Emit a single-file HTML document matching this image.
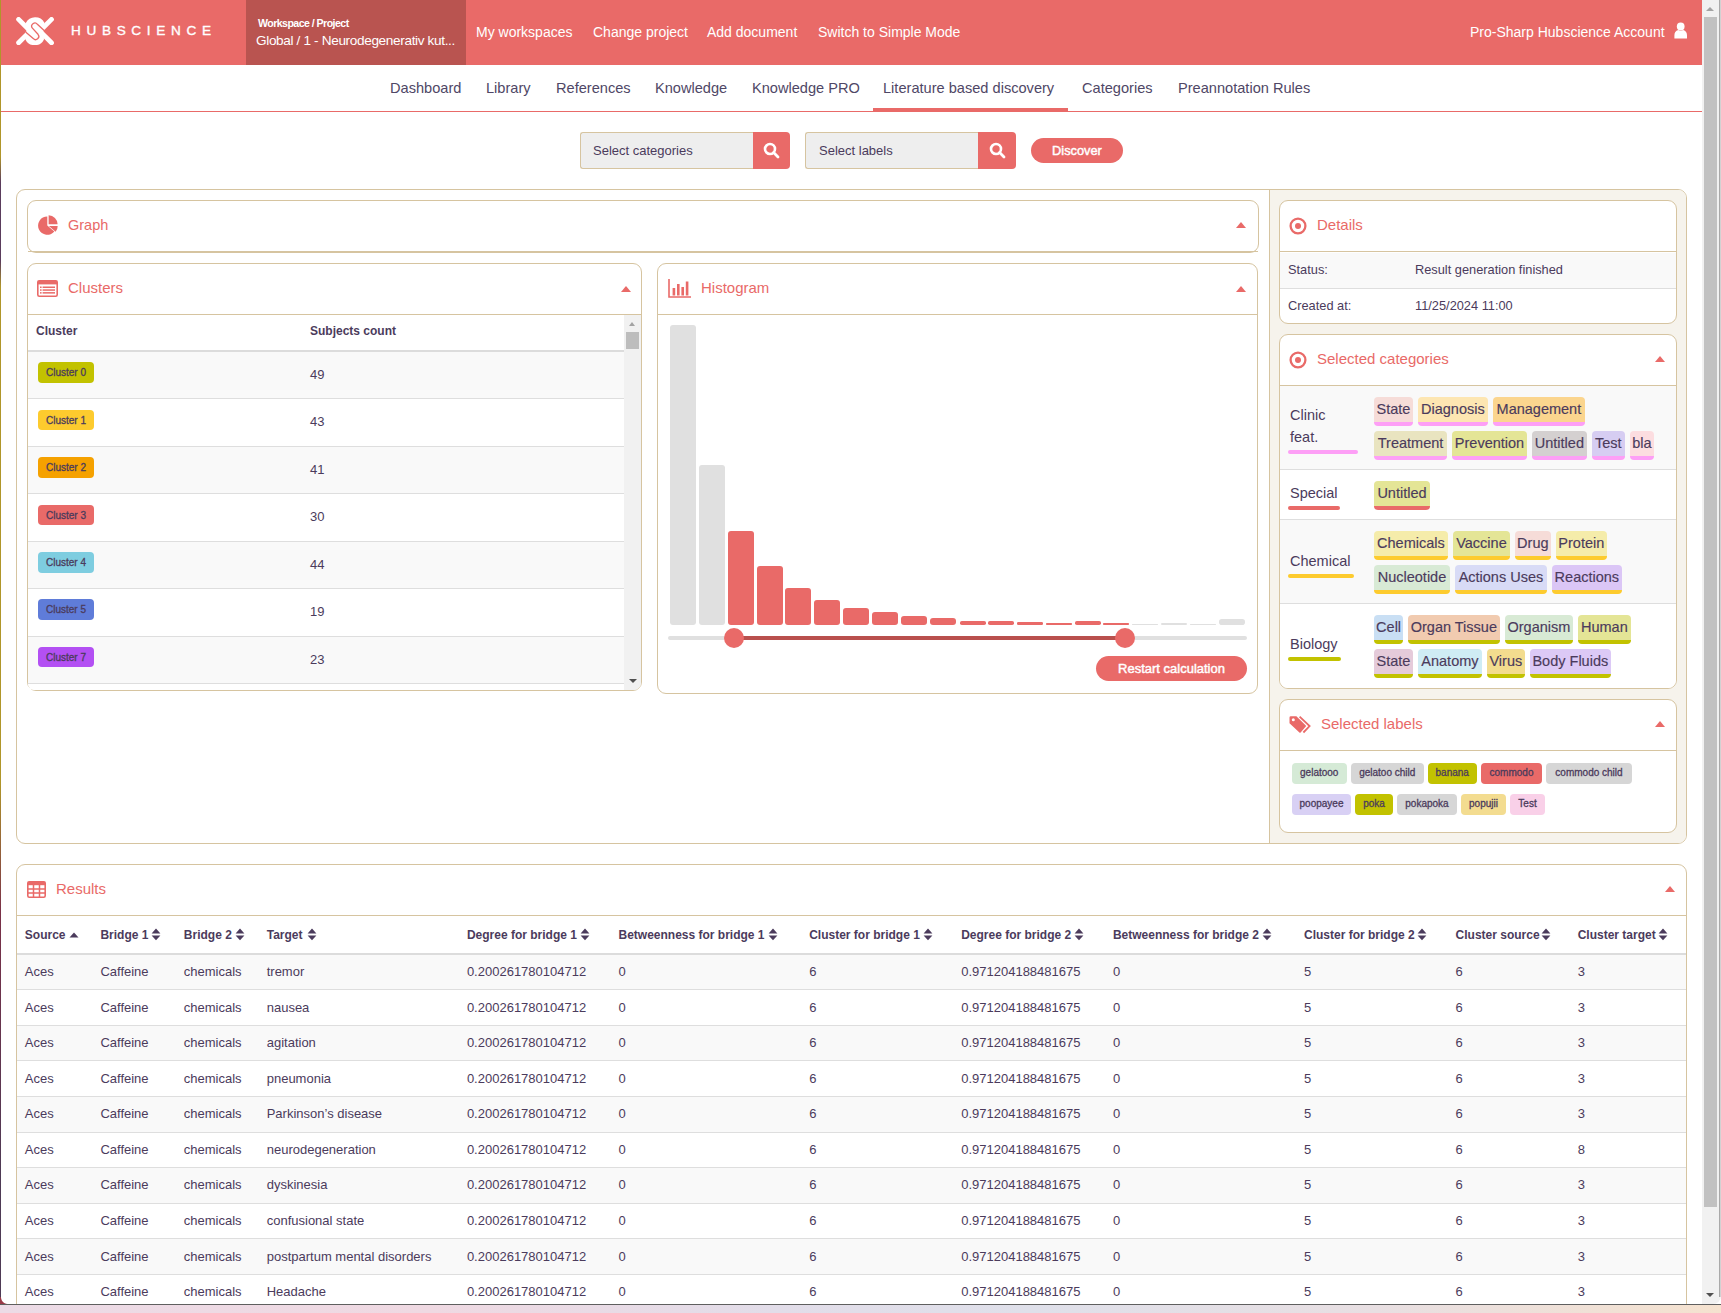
<!DOCTYPE html>
<html><head><meta charset="utf-8">
<style>
*{box-sizing:border-box;}
html,body{margin:0;padding:0;}
body{width:1721px;height:1313px;overflow:hidden;position:relative;background:#fff;font-family:"Liberation Sans",sans-serif;color:#4b3b5c;}
.abs{position:absolute;}
.nw{white-space:nowrap;}
#hdr{position:absolute;left:0;top:0;width:1702px;height:65px;background:#e96a68;}
#ws{position:absolute;left:246px;top:0;width:220px;height:65px;background:#b95450;}
.toplink{position:absolute;top:24px;font-size:14px;color:#fff;white-space:nowrap;line-height:17px;}
.tab{position:absolute;top:79px;font-size:14.6px;color:#4f4766;white-space:nowrap;line-height:18px;}
.panel{position:absolute;border:1px solid #d6c4a0;border-radius:9px;background:#fff;}
.ph{position:absolute;left:0;right:0;top:0;height:51px;border-bottom:1px solid #d6c4a0;}
.ptitle{position:absolute;font-size:15px;color:#e96a68;white-space:nowrap;line-height:18px;}
.tg{-webkit-text-stroke:0.15px #4b3b5c;height:29px;border-bottom:4px solid #fff;border-radius:4px;font-size:14.5px;line-height:24.5px;text-align:center;color:#4b3b5c;}
.caret{position:absolute;width:0;height:0;border-left:5px solid transparent;border-right:5px solid transparent;border-bottom:6px solid #e96a68;}
</style></head>
<body>
<!-- header -->
<div id="hdr"></div>
<div id="ws"></div>
<svg class="abs" style="left:16px;top:17px" width="38" height="28" viewBox="0 0 38 28">
  <g stroke="#fff" stroke-width="4.8" stroke-linecap="round" fill="none">
    <path d="M2.6 2.4 L12.5 12.3"/>
    <path d="M35.5 25.8 L25.6 15.9"/>
    <path d="M35.5 2.4 L25.6 12.3"/>
    <path d="M2.6 25.8 L12.5 15.9"/>
  </g>
  <path d="M9.8 6.1 A10.5 10.5 0 0 1 28.4 5.8 L27.4 13.8 L28 22.4 A10.35 10.35 0 0 1 9.4 22.4 L10.6 14.2 Z" fill="#fff"/>
  <path d="M9.9 15.2 L17.2 21.4 A3.1 3.1 0 0 0 22 17.3 L16.4 11.2 A3.1 3.1 0 0 1 21.4 7.3 L28.4 13.8" fill="none" stroke="#e96a68" stroke-width="1.3"/>
</svg>
<div class="abs nw" style="left:71px;top:23.8px;font-size:13.6px;letter-spacing:5.65px;color:#fff;line-height:14px;-webkit-text-stroke:0.35px #fff;">HUBSCIENCE</div>
<div class="abs nw" style="left:258px;top:16.5px;font-size:10.6px;font-weight:bold;color:#fff;letter-spacing:-0.55px;line-height:12px;">Workspace / Project</div>
<div class="abs nw" style="left:256px;top:33px;font-size:13.6px;color:#fff;letter-spacing:-0.35px;line-height:16px;">Global / 1 - Neurodegenerativ kut...</div>
<div class="toplink" style="left:476px">My workspaces</div>
<div class="toplink" style="left:593px">Change project</div>
<div class="toplink" style="left:707px">Add document</div>
<div class="toplink" style="left:818px">Switch to Simple Mode</div>
<div class="toplink" style="left:1470px">Pro-Sharp Hubscience Account</div>
<svg class="abs" style="left:1674px;top:22px" width="14" height="18" viewBox="0 0 14 18"><path d="M0.4 16.6 V13.4 A5.6 5.6 0 0 1 4.2 8 Q6.7 9.6 9.2 8 A5.6 5.6 0 0 1 13 13.4 V16.6 Z" fill="#fff"/><circle cx="6.7" cy="4.5" r="3.9" fill="#fff"/></svg>

<!-- nav tabs -->
<div class="abs" style="left:1px;top:111px;width:1701px;height:1px;background:#e96a68;"></div>
<div class="abs" style="left:873px;top:108px;width:195px;height:4px;background:#e96a68;"></div>
<div class="tab" style="left:390px">Dashboard</div>
<div class="tab" style="left:486px">Library</div>
<div class="tab" style="left:556px">References</div>
<div class="tab" style="left:655px">Knowledge</div>
<div class="tab" style="left:752px">Knowledge PRO</div>
<div class="tab" style="left:883px">Literature based discovery</div>
<div class="tab" style="left:1082px">Categories</div>
<div class="tab" style="left:1178px">Preannotation Rules</div>

<!-- search row -->
<div class="abs" style="left:580px;top:132px;width:174px;height:37px;background:#eeeeee;border:1px solid #d6c4a0;border-right:none;border-radius:3px 0 0 3px;"></div>
<div class="abs nw" style="left:593px;top:143px;font-size:13px;line-height:15px;color:#4b3b5c;">Select categories</div>
<div class="abs" style="left:753px;top:132px;width:37px;height:37px;background:#e96a68;border-radius:0 4px 4px 0;"></div>
<svg class="abs" style="left:763px;top:142px" width="17" height="17" viewBox="0 0 17 17"><circle cx="7" cy="7" r="5" fill="none" stroke="#fff" stroke-width="2.6"/><path d="M10.6 10.6 L15 15" stroke="#fff" stroke-width="2.8" stroke-linecap="round"/></svg>
<div class="abs" style="left:805px;top:132px;width:174px;height:37px;background:#eeeeee;border:1px solid #d6c4a0;border-right:none;border-radius:3px 0 0 3px;"></div>
<div class="abs nw" style="left:819px;top:143px;font-size:13px;line-height:15px;color:#4b3b5c;">Select labels</div>
<div class="abs" style="left:978px;top:132px;width:38px;height:37px;background:#e96a68;border-radius:0 4px 4px 0;"></div>
<svg class="abs" style="left:989px;top:142px" width="17" height="17" viewBox="0 0 17 17"><circle cx="7" cy="7" r="5" fill="none" stroke="#fff" stroke-width="2.6"/><path d="M10.6 10.6 L15 15" stroke="#fff" stroke-width="2.8" stroke-linecap="round"/></svg>
<div class="abs nw" style="left:1031px;top:138px;width:92px;height:25px;background:#e96a68;border-radius:13px;color:#fff;font-size:12.8px;text-align:center;line-height:26px;-webkit-text-stroke:0.45px #fff;">Discover</div>

<!-- main panel -->
<div class="panel" style="left:16px;top:189px;width:1671px;height:655px;overflow:hidden;">
  <div class="abs" style="left:1252px;top:0;width:418px;height:653px;background:#f6f3ec;border-left:1px solid #d6c4a0;"></div>
</div>
<!-- graph panel -->
<div class="panel" style="left:27px;top:200px;width:1232px;height:53px;"></div>
<div class="abs" style="left:28px;top:251px;width:1230px;height:1px;background:#d6c4a0;"></div>
<svg class="abs" style="left:37px;top:215px" width="22" height="21" viewBox="0 0 22 21"><path d="M10.3 10.6 L10.3 1.4 A9.2 9.2 0 1 0 17.35 16.5 Z" fill="#e96a68"/><path d="M11.6 9.3 L11.6 0.3 A9 9 0 0 1 20.6 9.3 Z" fill="#e96a68"/><path d="M11.9 11 L20.7 11 A9 9 0 0 1 18.6 16.8 Z" fill="#e96a68"/></svg>
<div class="ptitle" style="left:68px;top:216px;font-size:14.5px;">Graph</div>
<div class="caret" style="left:1236px;top:222px;"></div>

<!-- clusters panel -->
<div class="panel" style="left:27px;top:263px;width:615px;height:428px;overflow:hidden;">
  <div class="ph" style="height:51px;"></div>
</div>
<svg class="abs" style="left:37px;top:280px" width="21" height="17" viewBox="0 0 21 17"><rect x="0.8" y="0.8" width="19.4" height="15.4" rx="1.5" fill="none" stroke="#e96a68" stroke-width="1.6"/><rect x="0.8" y="0.8" width="19.4" height="3.6" fill="#e96a68"/><g fill="#e96a68"><rect x="3" y="6.5" width="1.6" height="1.5"/><rect x="3" y="9.3" width="1.6" height="1.5"/><rect x="3" y="12.1" width="1.6" height="1.5"/><rect x="5.6" y="6.5" width="12.4" height="1.5"/><rect x="5.6" y="9.3" width="12.4" height="1.5"/><rect x="5.6" y="12.1" width="12.4" height="1.5"/></g></svg>
<div class="ptitle" style="left:68px;top:279px;">Clusters</div>
<div class="caret" style="left:621px;top:286px;"></div>
<!-- clusters table -->
<div class="abs nw" style="left:36px;top:324px;font-size:12px;font-weight:bold;line-height:15px;">Cluster</div>
<div class="abs nw" style="left:310px;top:324px;font-size:12px;font-weight:bold;line-height:15px;">Subjects count</div>
<div class="abs" style="left:28px;top:350px;width:596px;height:2px;background:#dcdcdc;"></div>
<div class="abs" style="left:28px;top:352.00px;width:596px;height:47.45px;background:#f9f9f9;border-bottom:1px solid #dedede;"></div>
<div class="abs nw" style="left:38px;top:362.20px;width:56px;height:20.5px;background:#c2c200;border-radius:4px;font-size:10px;line-height:21px;text-align:center;color:#4b3b5c;-webkit-text-stroke:0.3px #4b3b5c;">Cluster 0</div>
<div class="abs nw" style="left:310px;top:367.00px;font-size:13px;line-height:15px;">49</div>
<div class="abs" style="left:28px;top:399.45px;width:596px;height:47.45px;background:#fff;border-bottom:1px solid #dedede;"></div>
<div class="abs nw" style="left:38px;top:409.65px;width:56px;height:20.5px;background:#fdcb2e;border-radius:4px;font-size:10px;line-height:21px;text-align:center;color:#4b3b5c;-webkit-text-stroke:0.3px #4b3b5c;">Cluster 1</div>
<div class="abs nw" style="left:310px;top:414.45px;font-size:13px;line-height:15px;">43</div>
<div class="abs" style="left:28px;top:446.90px;width:596px;height:47.45px;background:#f9f9f9;border-bottom:1px solid #dedede;"></div>
<div class="abs nw" style="left:38px;top:457.10px;width:56px;height:20.5px;background:#f5a100;border-radius:4px;font-size:10px;line-height:21px;text-align:center;color:#4b3b5c;-webkit-text-stroke:0.3px #4b3b5c;">Cluster 2</div>
<div class="abs nw" style="left:310px;top:461.90px;font-size:13px;line-height:15px;">41</div>
<div class="abs" style="left:28px;top:494.35px;width:596px;height:47.45px;background:#fff;border-bottom:1px solid #dedede;"></div>
<div class="abs nw" style="left:38px;top:504.55px;width:56px;height:20.5px;background:#e96a68;border-radius:4px;font-size:10px;line-height:21px;text-align:center;color:#4b3b5c;-webkit-text-stroke:0.3px #4b3b5c;">Cluster 3</div>
<div class="abs nw" style="left:310px;top:509.35px;font-size:13px;line-height:15px;">30</div>
<div class="abs" style="left:28px;top:541.80px;width:596px;height:47.45px;background:#f9f9f9;border-bottom:1px solid #dedede;"></div>
<div class="abs nw" style="left:38px;top:552.00px;width:56px;height:20.5px;background:#7ecde0;border-radius:4px;font-size:10px;line-height:21px;text-align:center;color:#4b3b5c;-webkit-text-stroke:0.3px #4b3b5c;">Cluster 4</div>
<div class="abs nw" style="left:310px;top:556.80px;font-size:13px;line-height:15px;">44</div>
<div class="abs" style="left:28px;top:589.25px;width:596px;height:47.45px;background:#fff;border-bottom:1px solid #dedede;"></div>
<div class="abs nw" style="left:38px;top:599.45px;width:56px;height:20.5px;background:#5f7cd9;border-radius:4px;font-size:10px;line-height:21px;text-align:center;color:#4b3b5c;-webkit-text-stroke:0.3px #4b3b5c;">Cluster 5</div>
<div class="abs nw" style="left:310px;top:604.25px;font-size:13px;line-height:15px;">19</div>
<div class="abs" style="left:28px;top:636.70px;width:596px;height:47.45px;background:#f9f9f9;border-bottom:1px solid #dedede;"></div>
<div class="abs nw" style="left:38px;top:646.90px;width:56px;height:20.5px;background:#b350f3;border-radius:4px;font-size:10px;line-height:21px;text-align:center;color:#4b3b5c;-webkit-text-stroke:0.3px #4b3b5c;">Cluster 7</div>
<div class="abs nw" style="left:310px;top:651.70px;font-size:13px;line-height:15px;">23</div>
<div class="abs" style="left:28px;top:684.15px;width:596px;height:5.5px;background:#fff;border-bottom-left-radius:8px;"></div>

<!-- clusters scrollbar -->
<div class="abs" style="left:624px;top:315px;width:17px;height:375px;background:#f1f1f1;border-radius:0 0 7px 0;"></div>
<div class="abs" style="left:626px;top:332px;width:13px;height:17px;background:#bdbdbd;"></div>
<div class="abs" style="left:629px;top:322px;width:0;height:0;border-left:3.5px solid transparent;border-right:3.5px solid transparent;border-bottom:4px solid #a3a3a3;"></div>
<div class="abs" style="left:628.5px;top:679px;width:0;height:0;border-left:4px solid transparent;border-right:4px solid transparent;border-bottom:none;border-top:4px solid #505050;"></div>

<!-- histogram panel -->
<div class="panel" style="left:657px;top:263px;width:601px;height:431px;">
  <div class="ph" style="height:51px;"></div>
</div>
<svg class="abs" style="left:668px;top:279px" width="24" height="19" viewBox="0 0 24 19"><path d="M1 0 V18 H23" fill="none" stroke="#e96a68" stroke-width="1.6"/><g fill="#e96a68"><rect x="4.6" y="9" width="2.6" height="7.5"/><rect x="9" y="5" width="2.6" height="11.5"/><rect x="13.4" y="8" width="2.6" height="8.5"/><rect x="17.8" y="2.5" width="2.6" height="14"/></g></svg>
<div class="ptitle" style="left:701px;top:279px;">Histogram</div>
<div class="caret" style="left:1236px;top:286px;"></div>
<div class="abs" style="left:670px;top:325px;width:26px;height:299.5px;background:#e0e0e0;border-radius:3.0px;"></div>
<div class="abs" style="left:699px;top:465px;width:26px;height:159.5px;background:#e0e0e0;border-radius:3.0px;"></div>
<div class="abs" style="left:728px;top:531px;width:26px;height:93.5px;background:#e96a68;border-radius:3.0px;"></div>
<div class="abs" style="left:757px;top:566px;width:26px;height:58.5px;background:#e96a68;border-radius:3.0px;"></div>
<div class="abs" style="left:785px;top:588px;width:26px;height:36.5px;background:#e96a68;border-radius:3.0px;"></div>
<div class="abs" style="left:814px;top:600px;width:26px;height:24.5px;background:#e96a68;border-radius:3.0px;"></div>
<div class="abs" style="left:843px;top:608px;width:26px;height:16.5px;background:#e96a68;border-radius:3.0px;"></div>
<div class="abs" style="left:872px;top:612px;width:26px;height:12.5px;background:#e96a68;border-radius:3.0px;"></div>
<div class="abs" style="left:901px;top:615.5px;width:26px;height:9.0px;background:#e96a68;border-radius:3.0px;"></div>
<div class="abs" style="left:930px;top:618px;width:26px;height:6.5px;background:#e96a68;border-radius:3.0px;"></div>
<div class="abs" style="left:959.5px;top:621px;width:26px;height:3.5px;background:#e96a68;border-radius:1.8px;"></div>
<div class="abs" style="left:988px;top:621px;width:26px;height:3.5px;background:#e96a68;border-radius:1.8px;"></div>
<div class="abs" style="left:1017px;top:622px;width:26px;height:2.5px;background:#e96a68;border-radius:1.2px;"></div>
<div class="abs" style="left:1046px;top:623px;width:26px;height:1.5px;background:#e96a68;border-radius:0.8px;"></div>
<div class="abs" style="left:1075px;top:621px;width:26px;height:3.5px;background:#e96a68;border-radius:1.8px;"></div>
<div class="abs" style="left:1103px;top:623px;width:26px;height:1.5px;background:#e96a68;border-radius:0.8px;"></div>
<div class="abs" style="left:1132px;top:623.5px;width:26px;height:1.0px;background:#e0e0e0;border-radius:0.5px;"></div>
<div class="abs" style="left:1161px;top:622.5px;width:26px;height:2.0px;background:#e0e0e0;border-radius:1.0px;"></div>
<div class="abs" style="left:1190px;top:623.5px;width:26px;height:1.0px;background:#e0e0e0;border-radius:0.5px;"></div>
<div class="abs" style="left:1219px;top:619px;width:26px;height:5.5px;background:#e0e0e0;border-radius:2.8px;"></div>
<div class="abs" style="left:668px;top:635.5px;width:579px;height:4px;background:#e0e0e0;border-radius:2px;"></div>
<div class="abs" style="left:734px;top:635.5px;width:391px;height:4px;background:#b9504d;"></div>
<div class="abs" style="left:724px;top:627.5px;width:20px;height:20px;background:#e96a68;border-radius:50%;"></div>
<div class="abs" style="left:1115px;top:627.5px;width:20px;height:20px;background:#e96a68;border-radius:50%;"></div>
<div class="abs nw" style="left:1096px;top:656px;width:151px;height:25px;background:#e96a68;border-radius:13px;color:#fff;font-size:13px;text-align:center;line-height:25.5px;-webkit-text-stroke:0.45px #fff;">Restart calculation</div>

<!-- details panel -->
<div class="panel" style="left:1279px;top:200px;width:398px;height:124px;overflow:hidden;">
  <div class="abs" style="left:0;top:52px;width:396px;height:36px;background:#f9f9f9;border-bottom:1px solid #dedede;"></div>
  <div class="ph" style="height:51px;"></div>
</div>
<svg class="abs" style="left:1289px;top:217px" width="18" height="18" viewBox="0 0 18 18"><circle cx="9" cy="9" r="7.4" fill="none" stroke="#e96a68" stroke-width="2.3"/><circle cx="9" cy="9" r="3" fill="#e96a68"/></svg>
<div class="ptitle" style="left:1317px;top:216px;">Details</div>
<div class="abs nw" style="left:1288px;top:262px;font-size:12.8px;line-height:15px;">Status:</div>
<div class="abs nw" style="left:1415px;top:262px;font-size:12.8px;line-height:15px;">Result generation finished</div>
<div class="abs nw" style="left:1288px;top:298px;font-size:12.8px;line-height:15px;">Created at:</div>
<div class="abs nw" style="left:1415px;top:298px;font-size:12.8px;line-height:15px;">11/25/2024 11:00</div>

<!-- selected categories panel -->
<div class="panel" style="left:1279px;top:334px;width:398px;height:355px;overflow:hidden;">
  <div class="ph" style="height:51px;"></div>
  <div class="abs" style="left:0;top:51.0px;width:396px;height:84.4px;background:#f9f9f9;border-bottom:1px solid #dedede;"></div>
<div class="abs" style="left:0;top:135.4px;width:396px;height:49.9px;background:#fff;border-bottom:1px solid #dedede;"></div>
<div class="abs" style="left:0;top:185.3px;width:396px;height:84.2px;background:#f9f9f9;border-bottom:1px solid #dedede;"></div>
<div class="abs" style="left:0;top:269.5px;width:396px;height:83.5px;background:#fff;"></div>

</div>
<svg class="abs" style="left:1289px;top:351px" width="18" height="18" viewBox="0 0 18 18"><circle cx="9" cy="9" r="7.4" fill="none" stroke="#e96a68" stroke-width="2.3"/><circle cx="9" cy="9" r="3" fill="#e96a68"/></svg>
<div class="ptitle" style="left:1317px;top:350px;">Selected categories</div>
<div class="caret" style="left:1655px;top:356px;"></div>
<div class="abs nw tg" style="left:1374.2px;top:397.0px;width:38.6px;background:#f6dcd8;border-bottom-color:#fd9ff6;">State</div>
<div class="abs nw tg" style="left:1418.1px;top:397.0px;width:69.6px;background:#fde6b2;border-bottom-color:#fd9ff6;">Diagnosis</div>
<div class="abs nw tg" style="left:1493.0px;top:397.0px;width:91.8px;background:#fbd58e;border-bottom-color:#fd9ff6;">Management</div>
<div class="abs nw tg" style="left:1374.2px;top:431.3px;width:72.7px;background:#e9e4c0;border-bottom-color:#fd9ff6;">Treatment</div>
<div class="abs nw tg" style="left:1452.3px;top:431.3px;width:74.4px;background:#e4e596;border-bottom-color:#fd9ff6;">Prevention</div>
<div class="abs nw tg" style="left:1532.1px;top:431.3px;width:54.6px;background:#d4d0d0;border-bottom-color:#fd9ff6;">Untitled</div>
<div class="abs nw tg" style="left:1592.1px;top:431.3px;width:32.5px;background:#d6cdf2;border-bottom-color:#fd9ff6;">Test</div>
<div class="abs nw tg" style="left:1630.2px;top:431.3px;width:23.6px;background:#fcdde0;border-bottom-color:#fd9ff6;">bla</div>
<div class="abs nw tg" style="left:1374.2px;top:481.2px;width:55.6px;background:#e4e596;border-bottom-color:#e96a68;">Untitled</div>
<div class="abs nw tg" style="left:1374.2px;top:531.2px;width:73.4px;background:#f5ecaa;border-bottom-color:#fdcb2e;">Chemicals</div>
<div class="abs nw tg" style="left:1453.0px;top:531.2px;width:56.9px;background:#e4e596;border-bottom-color:#fdcb2e;">Vaccine</div>
<div class="abs nw tg" style="left:1515.0px;top:531.2px;width:35.6px;background:#f6dcd8;border-bottom-color:#fdcb2e;">Drug</div>
<div class="abs nw tg" style="left:1556.0px;top:531.2px;width:50.7px;background:#f5ecaa;border-bottom-color:#fdcb2e;">Protein</div>
<div class="abs nw tg" style="left:1374.2px;top:565.2px;width:75.6px;background:#d8ead5;border-bottom-color:#fdcb2e;">Nucleotide</div>
<div class="abs nw tg" style="left:1455.2px;top:565.2px;width:91.5px;background:#d8dbf6;border-bottom-color:#fdcb2e;">Actions Uses</div>
<div class="abs nw tg" style="left:1552.1px;top:565.2px;width:69.5px;background:#dbc6f6;border-bottom-color:#fdcb2e;">Reactions</div>
<div class="abs nw tg" style="left:1374.2px;top:615.3px;width:28.8px;background:#c9dff4;border-bottom-color:#c2c200;">Cell</div>
<div class="abs nw tg" style="left:1408.1px;top:615.3px;width:91.5px;background:#f1cbb0;border-bottom-color:#c2c200;">Organ Tissue</div>
<div class="abs nw tg" style="left:1505.0px;top:615.3px;width:67.8px;background:#d8ead5;border-bottom-color:#c2c200;">Organism</div>
<div class="abs nw tg" style="left:1578.0px;top:615.3px;width:52.7px;background:#e4e596;border-bottom-color:#c2c200;">Human</div>
<div class="abs nw tg" style="left:1374.2px;top:649.3px;width:38.6px;background:#e5cbda;border-bottom-color:#c2c200;">State</div>
<div class="abs nw tg" style="left:1418.1px;top:649.3px;width:63.7px;background:#cfecf4;border-bottom-color:#c2c200;">Anatomy</div>
<div class="abs nw tg" style="left:1486.9px;top:649.3px;width:37.9px;background:#f3dc8e;border-bottom-color:#c2c200;">Virus</div>
<div class="abs nw tg" style="left:1530.1px;top:649.3px;width:80.5px;background:#dcc9f6;border-bottom-color:#c2c200;">Body Fluids</div>
<div class="abs nw" style="left:1290px;top:404px;font-size:14.5px;line-height:22px;">Clinic<br>feat.</div>
<div class="abs" style="left:1288px;top:450px;width:70px;height:4px;background:#fd9ff6;border-radius:2px;"></div>
<div class="abs nw" style="left:1290px;top:482px;font-size:14.5px;line-height:22px;">Special</div>
<div class="abs" style="left:1288px;top:506px;width:52px;height:4px;background:#e96a68;border-radius:2px;"></div>
<div class="abs nw" style="left:1290px;top:549.5px;font-size:14.5px;line-height:22px;">Chemical</div>
<div class="abs" style="left:1288px;top:574px;width:66px;height:4px;background:#fdcb2e;border-radius:2px;"></div>
<div class="abs nw" style="left:1290px;top:633px;font-size:14.5px;line-height:22px;">Biology</div>
<div class="abs" style="left:1288px;top:657px;width:53px;height:4px;background:#c2c200;border-radius:2px;"></div>


<!-- selected labels panel -->
<div class="panel" style="left:1279px;top:699px;width:398px;height:134px;">
  <div class="ph" style="height:51px;"></div>
</div>
<svg class="abs" style="left:1289px;top:714px" width="24" height="20" viewBox="0 0 24 20"><path d="M0.5 3.6 L0.5 9.2 L10.4 18.4 Q11 18.9 11.6 18.4 L16.8 12.6 Q17.3 12.1 16.8 11.6 L7.4 2.3 L1.8 2.3 Q0.5 2.3 0.5 3.6 Z" fill="#e96a68"/><circle cx="4.3" cy="5.8" r="1.5" fill="#fff"/><path d="M10.6 2.6 L20.6 12.1 L14.4 18.5" fill="none" stroke="#e96a68" stroke-width="1.8"/></svg>
<div class="ptitle" style="left:1321px;top:715px;">Selected labels</div>
<div class="caret" style="left:1655px;top:721px;"></div>
<div class="abs nw" style="left:1292px;top:763.25px;width:54.5px;height:20.5px;background:#d5ead6;border-radius:4px;font-size:10px;line-height:20.5px;text-align:center;-webkit-text-stroke:0.3px #4b3b5c;">gelatooo</div>
<div class="abs nw" style="left:1351px;top:763.25px;width:72.5px;height:20.5px;background:#d6d6d6;border-radius:4px;font-size:10px;line-height:20.5px;text-align:center;-webkit-text-stroke:0.3px #4b3b5c;">gelatoo child</div>
<div class="abs nw" style="left:1428px;top:763.25px;width:48.5px;height:20.5px;background:#c2c200;border-radius:4px;font-size:10px;line-height:20.5px;text-align:center;-webkit-text-stroke:0.3px #4b3b5c;">banana</div>
<div class="abs nw" style="left:1481px;top:763.25px;width:61px;height:20.5px;background:#e96a68;border-radius:4px;font-size:10px;line-height:20.5px;text-align:center;-webkit-text-stroke:0.3px #4b3b5c;">commodo</div>
<div class="abs nw" style="left:1546px;top:763.25px;width:86px;height:20.5px;background:#d6d6d6;border-radius:4px;font-size:10px;line-height:20.5px;text-align:center;-webkit-text-stroke:0.3px #4b3b5c;">commodo child</div>
<div class="abs nw" style="left:1292px;top:794.25px;width:59px;height:20.5px;background:#d8d0f4;border-radius:4px;font-size:10px;line-height:20.5px;text-align:center;-webkit-text-stroke:0.3px #4b3b5c;">poopayee</div>
<div class="abs nw" style="left:1355px;top:794.25px;width:38px;height:20.5px;background:#c2c200;border-radius:4px;font-size:10px;line-height:20.5px;text-align:center;-webkit-text-stroke:0.3px #4b3b5c;">poka</div>
<div class="abs nw" style="left:1397px;top:794.25px;width:60px;height:20.5px;background:#d6d6d6;border-radius:4px;font-size:10px;line-height:20.5px;text-align:center;-webkit-text-stroke:0.3px #4b3b5c;">pokapoka</div>
<div class="abs nw" style="left:1461px;top:794.25px;width:45px;height:20.5px;background:#f3dc90;border-radius:4px;font-size:10px;line-height:20.5px;text-align:center;-webkit-text-stroke:0.3px #4b3b5c;">popujii</div>
<div class="abs nw" style="left:1510px;top:794.25px;width:35px;height:20.5px;background:#f9d0e8;border-radius:4px;font-size:10px;line-height:20.5px;text-align:center;-webkit-text-stroke:0.3px #4b3b5c;">Test</div>

<!-- results panel -->
<div class="panel" style="left:16px;top:864px;width:1671px;height:520px;overflow:hidden;">
  <div class="ph" style="height:51px;"></div>
</div>
<svg class="abs" style="left:27px;top:881px" width="19" height="17" viewBox="0 0 19 17"><rect x="0.8" y="0.8" width="17.4" height="15.4" rx="1.4" fill="none" stroke="#e96a68" stroke-width="1.6"/><rect x="0.8" y="0.8" width="17.4" height="3.4" fill="#e96a68"/><g stroke="#e96a68" stroke-width="1.5"><path d="M1 8.1 H18 M1 12.1 H18 M6.5 1 V16 M12.5 1 V16"/></g></svg>
<div class="ptitle" style="left:56px;top:880px;">Results</div>
<div class="caret" style="left:1665px;top:886px;"></div>
<div class="abs" style="left:17px;top:953px;width:1669px;height:2px;background:#dcdcdc;"></div>
<div class="abs nw" style="left:24.8px;top:928px;font-size:12px;font-weight:bold;line-height:15px;">Source</div>
<svg class="abs" style="left:69px;top:928px" width="10" height="14" viewBox="0 0 10 14"><path d="M0.5 9.5 L5 4.6 L9.5 9.5 Z" fill="#4b3b5c"/></svg>
<div class="abs nw" style="left:100.4px;top:928px;font-size:12px;font-weight:bold;line-height:15px;">Bridge 1</div>
<svg class="abs" style="left:151px;top:927px" width="10" height="15" viewBox="0 0 10 15"><path d="M0.6 6.4 L5 1.6 L9.4 6.4 Z M0.6 8.4 L5 13.2 L9.4 8.4 Z" fill="#4b3b5c"/></svg>
<div class="abs nw" style="left:183.8px;top:928px;font-size:12px;font-weight:bold;line-height:15px;">Bridge 2</div>
<svg class="abs" style="left:234.7px;top:927px" width="10" height="15" viewBox="0 0 10 15"><path d="M0.6 6.4 L5 1.6 L9.4 6.4 Z M0.6 8.4 L5 13.2 L9.4 8.4 Z" fill="#4b3b5c"/></svg>
<div class="abs nw" style="left:266.7px;top:928px;font-size:12px;font-weight:bold;line-height:15px;">Target</div>
<svg class="abs" style="left:306.5px;top:927px" width="10" height="15" viewBox="0 0 10 15"><path d="M0.6 6.4 L5 1.6 L9.4 6.4 Z M0.6 8.4 L5 13.2 L9.4 8.4 Z" fill="#4b3b5c"/></svg>
<div class="abs nw" style="left:466.9px;top:928px;font-size:12px;font-weight:bold;line-height:15px;">Degree for bridge 1</div>
<svg class="abs" style="left:579.9px;top:927px" width="10" height="15" viewBox="0 0 10 15"><path d="M0.6 6.4 L5 1.6 L9.4 6.4 Z M0.6 8.4 L5 13.2 L9.4 8.4 Z" fill="#4b3b5c"/></svg>
<div class="abs nw" style="left:618.5px;top:928px;font-size:12px;font-weight:bold;line-height:15px;">Betweenness for bridge 1</div>
<svg class="abs" style="left:768.4px;top:927px" width="10" height="15" viewBox="0 0 10 15"><path d="M0.6 6.4 L5 1.6 L9.4 6.4 Z M0.6 8.4 L5 13.2 L9.4 8.4 Z" fill="#4b3b5c"/></svg>
<div class="abs nw" style="left:809.2px;top:928px;font-size:12px;font-weight:bold;line-height:15px;">Cluster for bridge 1</div>
<svg class="abs" style="left:922.5px;top:927px" width="10" height="15" viewBox="0 0 10 15"><path d="M0.6 6.4 L5 1.6 L9.4 6.4 Z M0.6 8.4 L5 13.2 L9.4 8.4 Z" fill="#4b3b5c"/></svg>
<div class="abs nw" style="left:961.2px;top:928px;font-size:12px;font-weight:bold;line-height:15px;">Degree for bridge 2</div>
<svg class="abs" style="left:1074.2px;top:927px" width="10" height="15" viewBox="0 0 10 15"><path d="M0.6 6.4 L5 1.6 L9.4 6.4 Z M0.6 8.4 L5 13.2 L9.4 8.4 Z" fill="#4b3b5c"/></svg>
<div class="abs nw" style="left:1112.9px;top:928px;font-size:12px;font-weight:bold;line-height:15px;">Betweenness for bridge 2</div>
<svg class="abs" style="left:1262px;top:927px" width="10" height="15" viewBox="0 0 10 15"><path d="M0.6 6.4 L5 1.6 L9.4 6.4 Z M0.6 8.4 L5 13.2 L9.4 8.4 Z" fill="#4b3b5c"/></svg>
<div class="abs nw" style="left:1304px;top:928px;font-size:12px;font-weight:bold;line-height:15px;">Cluster for bridge 2</div>
<svg class="abs" style="left:1417.3px;top:927px" width="10" height="15" viewBox="0 0 10 15"><path d="M0.6 6.4 L5 1.6 L9.4 6.4 Z M0.6 8.4 L5 13.2 L9.4 8.4 Z" fill="#4b3b5c"/></svg>
<div class="abs nw" style="left:1455.6px;top:928px;font-size:12px;font-weight:bold;line-height:15px;">Cluster source</div>
<svg class="abs" style="left:1541px;top:927px" width="10" height="15" viewBox="0 0 10 15"><path d="M0.6 6.4 L5 1.6 L9.4 6.4 Z M0.6 8.4 L5 13.2 L9.4 8.4 Z" fill="#4b3b5c"/></svg>
<div class="abs nw" style="left:1577.7px;top:928px;font-size:12px;font-weight:bold;line-height:15px;">Cluster target</div>
<svg class="abs" style="left:1657.9px;top:927px" width="10" height="15" viewBox="0 0 10 15"><path d="M0.6 6.4 L5 1.6 L9.4 6.4 Z M0.6 8.4 L5 13.2 L9.4 8.4 Z" fill="#4b3b5c"/></svg>
<div class="abs" style="left:17px;top:955.00px;width:1669px;height:35.30px;background:#f9f9f9;border-bottom:1px solid #dedede;"></div>
<div class="abs nw" style="left:24.8px;top:964.15px;font-size:13px;line-height:15px;">Aces</div>
<div class="abs nw" style="left:100.4px;top:964.15px;font-size:13px;line-height:15px;">Caffeine</div>
<div class="abs nw" style="left:183.8px;top:964.15px;font-size:13px;line-height:15px;">chemicals</div>
<div class="abs nw" style="left:266.7px;top:964.15px;font-size:13px;line-height:15px;">tremor</div>
<div class="abs nw" style="left:466.9px;top:964.15px;font-size:13px;line-height:15px;">0.200261780104712</div>
<div class="abs nw" style="left:618.5px;top:964.15px;font-size:13px;line-height:15px;">0</div>
<div class="abs nw" style="left:809.2px;top:964.15px;font-size:13px;line-height:15px;">6</div>
<div class="abs nw" style="left:961.2px;top:964.15px;font-size:13px;line-height:15px;">0.971204188481675</div>
<div class="abs nw" style="left:1112.9px;top:964.15px;font-size:13px;line-height:15px;">0</div>
<div class="abs nw" style="left:1304px;top:964.15px;font-size:13px;line-height:15px;">5</div>
<div class="abs nw" style="left:1455.6px;top:964.15px;font-size:13px;line-height:15px;">6</div>
<div class="abs nw" style="left:1577.7px;top:964.15px;font-size:13px;line-height:15px;">3</div>
<div class="abs" style="left:17px;top:990.30px;width:1669px;height:35.58px;background:#fff;border-bottom:1px solid #dedede;"></div>
<div class="abs nw" style="left:24.8px;top:999.59px;font-size:13px;line-height:15px;">Aces</div>
<div class="abs nw" style="left:100.4px;top:999.59px;font-size:13px;line-height:15px;">Caffeine</div>
<div class="abs nw" style="left:183.8px;top:999.59px;font-size:13px;line-height:15px;">chemicals</div>
<div class="abs nw" style="left:266.7px;top:999.59px;font-size:13px;line-height:15px;">nausea</div>
<div class="abs nw" style="left:466.9px;top:999.59px;font-size:13px;line-height:15px;">0.200261780104712</div>
<div class="abs nw" style="left:618.5px;top:999.59px;font-size:13px;line-height:15px;">0</div>
<div class="abs nw" style="left:809.2px;top:999.59px;font-size:13px;line-height:15px;">6</div>
<div class="abs nw" style="left:961.2px;top:999.59px;font-size:13px;line-height:15px;">0.971204188481675</div>
<div class="abs nw" style="left:1112.9px;top:999.59px;font-size:13px;line-height:15px;">0</div>
<div class="abs nw" style="left:1304px;top:999.59px;font-size:13px;line-height:15px;">5</div>
<div class="abs nw" style="left:1455.6px;top:999.59px;font-size:13px;line-height:15px;">6</div>
<div class="abs nw" style="left:1577.7px;top:999.59px;font-size:13px;line-height:15px;">3</div>
<div class="abs" style="left:17px;top:1025.88px;width:1669px;height:35.58px;background:#f9f9f9;border-bottom:1px solid #dedede;"></div>
<div class="abs nw" style="left:24.8px;top:1035.17px;font-size:13px;line-height:15px;">Aces</div>
<div class="abs nw" style="left:100.4px;top:1035.17px;font-size:13px;line-height:15px;">Caffeine</div>
<div class="abs nw" style="left:183.8px;top:1035.17px;font-size:13px;line-height:15px;">chemicals</div>
<div class="abs nw" style="left:266.7px;top:1035.17px;font-size:13px;line-height:15px;">agitation</div>
<div class="abs nw" style="left:466.9px;top:1035.17px;font-size:13px;line-height:15px;">0.200261780104712</div>
<div class="abs nw" style="left:618.5px;top:1035.17px;font-size:13px;line-height:15px;">0</div>
<div class="abs nw" style="left:809.2px;top:1035.17px;font-size:13px;line-height:15px;">6</div>
<div class="abs nw" style="left:961.2px;top:1035.17px;font-size:13px;line-height:15px;">0.971204188481675</div>
<div class="abs nw" style="left:1112.9px;top:1035.17px;font-size:13px;line-height:15px;">0</div>
<div class="abs nw" style="left:1304px;top:1035.17px;font-size:13px;line-height:15px;">5</div>
<div class="abs nw" style="left:1455.6px;top:1035.17px;font-size:13px;line-height:15px;">6</div>
<div class="abs nw" style="left:1577.7px;top:1035.17px;font-size:13px;line-height:15px;">3</div>
<div class="abs" style="left:17px;top:1061.46px;width:1669px;height:35.58px;background:#fff;border-bottom:1px solid #dedede;"></div>
<div class="abs nw" style="left:24.8px;top:1070.75px;font-size:13px;line-height:15px;">Aces</div>
<div class="abs nw" style="left:100.4px;top:1070.75px;font-size:13px;line-height:15px;">Caffeine</div>
<div class="abs nw" style="left:183.8px;top:1070.75px;font-size:13px;line-height:15px;">chemicals</div>
<div class="abs nw" style="left:266.7px;top:1070.75px;font-size:13px;line-height:15px;">pneumonia</div>
<div class="abs nw" style="left:466.9px;top:1070.75px;font-size:13px;line-height:15px;">0.200261780104712</div>
<div class="abs nw" style="left:618.5px;top:1070.75px;font-size:13px;line-height:15px;">0</div>
<div class="abs nw" style="left:809.2px;top:1070.75px;font-size:13px;line-height:15px;">6</div>
<div class="abs nw" style="left:961.2px;top:1070.75px;font-size:13px;line-height:15px;">0.971204188481675</div>
<div class="abs nw" style="left:1112.9px;top:1070.75px;font-size:13px;line-height:15px;">0</div>
<div class="abs nw" style="left:1304px;top:1070.75px;font-size:13px;line-height:15px;">5</div>
<div class="abs nw" style="left:1455.6px;top:1070.75px;font-size:13px;line-height:15px;">6</div>
<div class="abs nw" style="left:1577.7px;top:1070.75px;font-size:13px;line-height:15px;">3</div>
<div class="abs" style="left:17px;top:1097.04px;width:1669px;height:35.58px;background:#f9f9f9;border-bottom:1px solid #dedede;"></div>
<div class="abs nw" style="left:24.8px;top:1106.33px;font-size:13px;line-height:15px;">Aces</div>
<div class="abs nw" style="left:100.4px;top:1106.33px;font-size:13px;line-height:15px;">Caffeine</div>
<div class="abs nw" style="left:183.8px;top:1106.33px;font-size:13px;line-height:15px;">chemicals</div>
<div class="abs nw" style="left:266.7px;top:1106.33px;font-size:13px;line-height:15px;">Parkinson’s disease</div>
<div class="abs nw" style="left:466.9px;top:1106.33px;font-size:13px;line-height:15px;">0.200261780104712</div>
<div class="abs nw" style="left:618.5px;top:1106.33px;font-size:13px;line-height:15px;">0</div>
<div class="abs nw" style="left:809.2px;top:1106.33px;font-size:13px;line-height:15px;">6</div>
<div class="abs nw" style="left:961.2px;top:1106.33px;font-size:13px;line-height:15px;">0.971204188481675</div>
<div class="abs nw" style="left:1112.9px;top:1106.33px;font-size:13px;line-height:15px;">0</div>
<div class="abs nw" style="left:1304px;top:1106.33px;font-size:13px;line-height:15px;">5</div>
<div class="abs nw" style="left:1455.6px;top:1106.33px;font-size:13px;line-height:15px;">6</div>
<div class="abs nw" style="left:1577.7px;top:1106.33px;font-size:13px;line-height:15px;">3</div>
<div class="abs" style="left:17px;top:1132.62px;width:1669px;height:35.58px;background:#fff;border-bottom:1px solid #dedede;"></div>
<div class="abs nw" style="left:24.8px;top:1141.91px;font-size:13px;line-height:15px;">Aces</div>
<div class="abs nw" style="left:100.4px;top:1141.91px;font-size:13px;line-height:15px;">Caffeine</div>
<div class="abs nw" style="left:183.8px;top:1141.91px;font-size:13px;line-height:15px;">chemicals</div>
<div class="abs nw" style="left:266.7px;top:1141.91px;font-size:13px;line-height:15px;">neurodegeneration</div>
<div class="abs nw" style="left:466.9px;top:1141.91px;font-size:13px;line-height:15px;">0.200261780104712</div>
<div class="abs nw" style="left:618.5px;top:1141.91px;font-size:13px;line-height:15px;">0</div>
<div class="abs nw" style="left:809.2px;top:1141.91px;font-size:13px;line-height:15px;">6</div>
<div class="abs nw" style="left:961.2px;top:1141.91px;font-size:13px;line-height:15px;">0.971204188481675</div>
<div class="abs nw" style="left:1112.9px;top:1141.91px;font-size:13px;line-height:15px;">0</div>
<div class="abs nw" style="left:1304px;top:1141.91px;font-size:13px;line-height:15px;">5</div>
<div class="abs nw" style="left:1455.6px;top:1141.91px;font-size:13px;line-height:15px;">6</div>
<div class="abs nw" style="left:1577.7px;top:1141.91px;font-size:13px;line-height:15px;">8</div>
<div class="abs" style="left:17px;top:1168.20px;width:1669px;height:35.58px;background:#f9f9f9;border-bottom:1px solid #dedede;"></div>
<div class="abs nw" style="left:24.8px;top:1177.49px;font-size:13px;line-height:15px;">Aces</div>
<div class="abs nw" style="left:100.4px;top:1177.49px;font-size:13px;line-height:15px;">Caffeine</div>
<div class="abs nw" style="left:183.8px;top:1177.49px;font-size:13px;line-height:15px;">chemicals</div>
<div class="abs nw" style="left:266.7px;top:1177.49px;font-size:13px;line-height:15px;">dyskinesia</div>
<div class="abs nw" style="left:466.9px;top:1177.49px;font-size:13px;line-height:15px;">0.200261780104712</div>
<div class="abs nw" style="left:618.5px;top:1177.49px;font-size:13px;line-height:15px;">0</div>
<div class="abs nw" style="left:809.2px;top:1177.49px;font-size:13px;line-height:15px;">6</div>
<div class="abs nw" style="left:961.2px;top:1177.49px;font-size:13px;line-height:15px;">0.971204188481675</div>
<div class="abs nw" style="left:1112.9px;top:1177.49px;font-size:13px;line-height:15px;">0</div>
<div class="abs nw" style="left:1304px;top:1177.49px;font-size:13px;line-height:15px;">5</div>
<div class="abs nw" style="left:1455.6px;top:1177.49px;font-size:13px;line-height:15px;">6</div>
<div class="abs nw" style="left:1577.7px;top:1177.49px;font-size:13px;line-height:15px;">3</div>
<div class="abs" style="left:17px;top:1203.78px;width:1669px;height:35.58px;background:#fff;border-bottom:1px solid #dedede;"></div>
<div class="abs nw" style="left:24.8px;top:1213.07px;font-size:13px;line-height:15px;">Aces</div>
<div class="abs nw" style="left:100.4px;top:1213.07px;font-size:13px;line-height:15px;">Caffeine</div>
<div class="abs nw" style="left:183.8px;top:1213.07px;font-size:13px;line-height:15px;">chemicals</div>
<div class="abs nw" style="left:266.7px;top:1213.07px;font-size:13px;line-height:15px;">confusional state</div>
<div class="abs nw" style="left:466.9px;top:1213.07px;font-size:13px;line-height:15px;">0.200261780104712</div>
<div class="abs nw" style="left:618.5px;top:1213.07px;font-size:13px;line-height:15px;">0</div>
<div class="abs nw" style="left:809.2px;top:1213.07px;font-size:13px;line-height:15px;">6</div>
<div class="abs nw" style="left:961.2px;top:1213.07px;font-size:13px;line-height:15px;">0.971204188481675</div>
<div class="abs nw" style="left:1112.9px;top:1213.07px;font-size:13px;line-height:15px;">0</div>
<div class="abs nw" style="left:1304px;top:1213.07px;font-size:13px;line-height:15px;">5</div>
<div class="abs nw" style="left:1455.6px;top:1213.07px;font-size:13px;line-height:15px;">6</div>
<div class="abs nw" style="left:1577.7px;top:1213.07px;font-size:13px;line-height:15px;">3</div>
<div class="abs" style="left:17px;top:1239.36px;width:1669px;height:35.58px;background:#f9f9f9;border-bottom:1px solid #dedede;"></div>
<div class="abs nw" style="left:24.8px;top:1248.65px;font-size:13px;line-height:15px;">Aces</div>
<div class="abs nw" style="left:100.4px;top:1248.65px;font-size:13px;line-height:15px;">Caffeine</div>
<div class="abs nw" style="left:183.8px;top:1248.65px;font-size:13px;line-height:15px;">chemicals</div>
<div class="abs nw" style="left:266.7px;top:1248.65px;font-size:13px;line-height:15px;">postpartum mental disorders</div>
<div class="abs nw" style="left:466.9px;top:1248.65px;font-size:13px;line-height:15px;">0.200261780104712</div>
<div class="abs nw" style="left:618.5px;top:1248.65px;font-size:13px;line-height:15px;">0</div>
<div class="abs nw" style="left:809.2px;top:1248.65px;font-size:13px;line-height:15px;">6</div>
<div class="abs nw" style="left:961.2px;top:1248.65px;font-size:13px;line-height:15px;">0.971204188481675</div>
<div class="abs nw" style="left:1112.9px;top:1248.65px;font-size:13px;line-height:15px;">0</div>
<div class="abs nw" style="left:1304px;top:1248.65px;font-size:13px;line-height:15px;">5</div>
<div class="abs nw" style="left:1455.6px;top:1248.65px;font-size:13px;line-height:15px;">6</div>
<div class="abs nw" style="left:1577.7px;top:1248.65px;font-size:13px;line-height:15px;">3</div>
<div class="abs" style="left:17px;top:1274.94px;width:1669px;height:35.58px;background:#fff;border-bottom:1px solid #dedede;"></div>
<div class="abs nw" style="left:24.8px;top:1284.23px;font-size:13px;line-height:15px;">Aces</div>
<div class="abs nw" style="left:100.4px;top:1284.23px;font-size:13px;line-height:15px;">Caffeine</div>
<div class="abs nw" style="left:183.8px;top:1284.23px;font-size:13px;line-height:15px;">chemicals</div>
<div class="abs nw" style="left:266.7px;top:1284.23px;font-size:13px;line-height:15px;">Headache</div>
<div class="abs nw" style="left:466.9px;top:1284.23px;font-size:13px;line-height:15px;">0.200261780104712</div>
<div class="abs nw" style="left:618.5px;top:1284.23px;font-size:13px;line-height:15px;">0</div>
<div class="abs nw" style="left:809.2px;top:1284.23px;font-size:13px;line-height:15px;">6</div>
<div class="abs nw" style="left:961.2px;top:1284.23px;font-size:13px;line-height:15px;">0.971204188481675</div>
<div class="abs nw" style="left:1112.9px;top:1284.23px;font-size:13px;line-height:15px;">0</div>
<div class="abs nw" style="left:1304px;top:1284.23px;font-size:13px;line-height:15px;">5</div>
<div class="abs nw" style="left:1455.6px;top:1284.23px;font-size:13px;line-height:15px;">6</div>
<div class="abs nw" style="left:1577.7px;top:1284.23px;font-size:13px;line-height:15px;">3</div>

<!-- SECTIONS -->

<!-- scrollbar -->
<div class="abs" style="left:1702px;top:0;width:19px;height:1304px;background:#f1f1f1;border-bottom-right-radius:8px;"></div>
<div class="abs" style="left:1704px;top:17px;width:13px;height:1190px;background:#c1c1c1;"></div>
<div class="abs" style="left:1719px;top:0;width:1px;height:1297px;background:#a9a9a9;"></div><div class="abs" style="left:1720px;top:0;width:1px;height:1297px;background:#d2d2d2;"></div>
<div class="abs" style="left:1706px;top:7px;width:0;height:0;border-left:4px solid transparent;border-right:4px solid transparent;border-bottom:4px solid #a3a3a3;"></div>
<div class="abs" style="left:1706px;top:1293px;width:0;height:0;border-left:4px solid transparent;border-right:4px solid transparent;border-top:4px solid #505050;"></div>
<!-- desktop strip -->
<div class="abs" style="left:0;top:1305px;width:1721px;height:8px;background:linear-gradient(90deg,#ecdbe6 0%,#efd9e2 25%,#e2dde9 45%,#dfe0ea 60%,#e8dfe2 80%,#f5e2cf 100%);"></div>
<div class="abs" style="left:0;top:1304px;width:1721px;height:1px;background:#5f5f5f;"></div>
<div class="abs" style="left:0;top:0;width:1px;height:1304px;background:linear-gradient(180deg,#b0962a 0%,#b0962a 12%,#5a3c5c 14%,#5a3c5c 20%,#b0962a 22%,#b0962a 60%,#7a3048 70%,#4e3a55 90%);"></div>
<div class="abs" style="left:0;top:1297px;width:8px;height:7px;background:radial-gradient(circle at 8px 0px,rgba(255,255,255,0) 6.5px,#9a3a48 7.5px);"></div>
</body></html>
